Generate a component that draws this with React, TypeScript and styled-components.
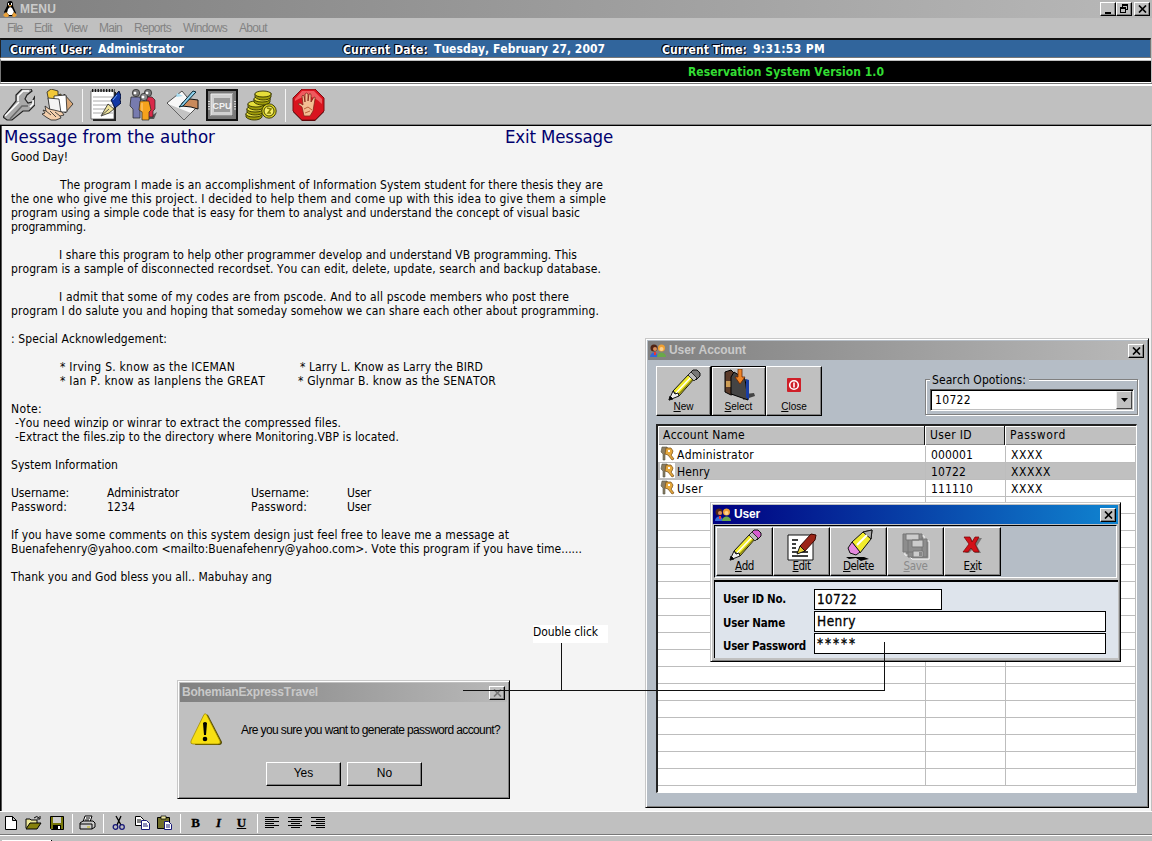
import React, { useLayoutEffect, useRef, useState } from "react";
import styled, { createGlobalStyle, css } from "styled-components";

const tahoma = `"DejaVu Sans Condensed", "DejaVu Sans", sans-serif`;
const arial = `"Liberation Sans", Arial, sans-serif`;

const Global = createGlobalStyle`
  * { box-sizing: border-box; }
  html, body { margin: 0; padding: 0; overflow: hidden; background: #c0c0c0; }
  body { font-family: ${tahoma}; font-stretch: condensed; font-size: 12px; color: #000; }
  svg { display: block; flex: none; }
`;

/* Text whose letter spacing is tuned so the run takes exactly `w` pixels. */
const Run = styled.span`
  display: inline-block;
  white-space: pre;
  font-kerning: none;
`;
function Fit({ w, children }: { w: number; children: React.ReactNode }) {
  const ref = useRef<HTMLSpanElement>(null);
  const [gap, setGap] = useState(0);
  useLayoutEffect(() => {
    const el = ref.current;
    if (!el) return;
    const n = (el.textContent || "").length;
    setGap((w - el.getBoundingClientRect().width) / Math.max(1, n));
  }, [w]);
  return (
    <Run ref={ref} style={{ letterSpacing: `${gap}px` }}>
      {children}
    </Run>
  );
}

const Screen = styled.div`
  position: relative;
  width: 1152px;
  height: 841px;
  overflow: hidden;
  display: flex;
  flex-direction: column;
  background: #c0c0c0;
`;

const TitleBar = styled.div`
  height: 18px;
  flex: none;
  display: flex;
  align-items: center;
  padding: 0 2px 0 3px;
  background: linear-gradient(90deg, #808080, #b8b8b8);
  color: #cbcbcb;
  font: bold 12px/18px ${arial};
`;
const TitleText = styled.div<{ $flush?: boolean }>`
  flex: 1;
  padding-left: ${(p) => (p.$flush ? 0 : 3)}px;
`;
const Buttons = styled.div`
  display: flex;
`;
const WinButton = styled.div<{ $gap?: number }>`
  width: 16px;
  height: 14px;
  flex: none;
  margin-left: ${(p) => p.$gap || 0}px;
  display: flex;
  align-items: center;
  justify-content: center;
  background: #c0c0c0;
  border: 1px solid;
  border-color: #fff #000 #000 #fff;
  box-shadow: inset -1px -1px #808080;
`;

const MenuBar = styled.div`
  height: 20px;
  flex: none;
  display: flex;
  gap: 12px;
  padding-left: 7px;
  font: 12px/20px ${arial};
  color: #838383;
`;

const InfoBar = styled.div`
  height: 20px;
  flex: none;
  margin-right: 1px;
  display: grid;
  grid-template-columns: 88px 245px 91px 228px 91px 1fr;
  padding-left: 9px;
  border-style: solid;
  border-width: 2px 1px 1px;
  border-color: #111 #777 #777 #222;
  background: #31659c;
  color: #fff;
  font-weight: bold;
  line-height: 18px;
`;
const InfoLabel = styled.div`
  padding-top: 1px;
  text-shadow: -1px 0 #001, -1px -1px #001, 1px 1px #123;
`;
const InfoValue = styled.div``;
const Ticker = styled.div`
  height: 25px;
  flex: none;
  margin-right: 1px;
  border-style: solid;
  border-width: 2px 0 1px 1px;
  border-color: #fff #fff #fff #777;
  padding: 1px 0 0;
  background: #c0c0c0;
`;
const TickerInner = styled.div`
  height: 21px;
  background: #000;
  color: #33dd33;
  font-weight: bold;
  line-height: 22px;
  padding-left: 687px;
`;
const Toolbar = styled.div`
  height: 42px;
  flex: none;
  display: flex;
  gap: 7px;
  padding: 5px 0 0 3px;
  border-top: 1px solid #777;
  border-bottom: 1px solid #808080;
  box-shadow: inset 0 2px #fff;
`;
const ToolSep = styled.div`
  width: 1px;
  height: 33px;
  flex: none;
  margin: 0 -1px 0 1px;
  background: #f4f4f4;
`;

const Desktop = styled.div`
  height: 686px;
  flex: none;
  position: relative;
  margin-right: 1px;
  border: solid #000;
  border-width: 1px 0 0 1px;
  box-shadow: inset 1px 0 #555;
  background: #f4f4f4;
`;
const Headings = styled.div`
  display: grid;
  grid-template-columns: 501px 1fr;
  height: 24px;
  padding-left: 3px;
  font-size: 18.5px;
  line-height: 22px;
  color: #00006e;
`;
const Letter = styled.div`
  padding-left: 10px;
  line-height: 14px;
`;
const Line = styled.div<{ $cols?: string }>`
  height: 14px;
  display: grid;
  grid-template-columns: ${(p) => p.$cols || "1fr"};
`;
const Indent = styled.div<{ $by: number }>`
  height: 14px;
  padding-left: ${(p) => p.$by}px;
`;

const Window = styled.section<{ $x: number; $y: number; $w: number; $h: number; $bg: string }>`
  position: absolute;
  left: ${(p) => p.$x}px;
  top: ${(p) => p.$y}px;
  width: ${(p) => p.$w}px;
  height: ${(p) => p.$h}px;
  display: flex;
  flex-direction: column;
  padding: 1px;
  border: 1px solid;
  border-color: #c8c8c8 #000 #000 #c8c8c8;
  box-shadow: inset 1px 1px #fff, inset -1px -1px #808080;
  background: ${(p) => p.$bg};
`;
const Caption = styled.div<{ $active?: boolean }>`
  height: 19px;
  flex: none;
  margin: 1px 1px 0;
  display: flex;
  align-items: center;
  padding: 0 2px;
  font: bold 12px/19px ${arial};
  background: ${(p) =>
    p.$active ? "linear-gradient(90deg, #000080, #1084d0)" : "linear-gradient(90deg, #808080, #b9b9b9)"};
  color: ${(p) => (p.$active ? "#fff" : "#c9c9c9")};
`;

const AccountTop = styled.div`
  display: flex;
  justify-content: space-between;
  height: 64px;
  flex: none;
  padding: 6px 9px 0;
`;
const ButtonStrip = styled.div`
  display: flex;
`;
const BigButton = styled.div<{ $w: number; $h: number; $pressed?: boolean; $font: string; $dim?: boolean }>`
  width: ${(p) => p.$w}px;
  height: ${(p) => p.$h}px;
  display: flex;
  flex-direction: column;
  align-items: center;
  background: #c0c0c0;
  border: 1px solid;
  border-color: #fff #000 #000 #fff;
  box-shadow: inset -1px -1px #808080;
  padding-top: ${(p) => p.$h - 48}px;
  font: ${(p) => p.$font};
  color: ${(p) => (p.$dim ? "#8a8a8a" : "#000")};
  ${(p) => p.$pressed && css`border-color: #000; box-shadow: inset 1px 1px #fff, inset -1px -1px #808080;`}
  u { text-underline-offset: 1px; }
`;
const ButtonText = styled.div`
  margin-top: -1px;
`;
const SearchGroup = styled.div`
  width: 213px;
  height: 36px;
  margin-top: 13px;
  border: 1px solid #808080;
  box-shadow: inset 1px 1px #fff, 1px 1px #fff;
  display: flex;
  flex-direction: column;
  padding-left: 4px;
`;
const Legend = styled.div`
  width: 99px;
  margin-top: -7px;
  padding-left: 2px;
  height: 14px;
  line-height: 14px;
  background: #b5bdc6;
`;
const Combo = styled.div`
  width: 204px;
  height: 22px;
  margin-top: 2px;
  display: flex;
  justify-content: space-between;
  padding: 1px 1px 1px 4px;
  border: 1px solid;
  border-color: #555 #fff #fff #555;
  box-shadow: inset 1px 1px #000, inset -1px -1px #c0c0c0;
  background: #fff;
  line-height: 19px;
`;
const Drop = styled.div`
  width: 16px;
  height: 18px;
  display: flex;
  align-items: center;
  justify-content: center;
  background: #c0c0c0;
  border: 1px solid;
  border-color: #eee #444 #444 #eee;
`;

const Table = styled.div`
  width: 481px;
  height: 369px;
  margin-left: 9px;
  flex: none;
  overflow: hidden;
  border: solid;
  border-width: 2px 1px 1px 2px;
  border-color: #222 #fff #fff #222;
  background: #fff;
`;
const Head = styled.div`
  height: 19px;
  display: grid;
  grid-template-columns: 267px 80px 1fr;
  margin-bottom: 1px;
  background: #c0c0c0;
  border-bottom: 1px solid #000;
  line-height: 19px;
`;
const HeadCell = styled.div`
  padding-left: 5px;
  border-right: 1px solid #111;
  box-shadow: inset 1px 1px #fff, inset 0 -1px #888;
  &:last-child { border-right: 0; }
`;
const Row = styled.div<{ $on?: boolean }>`
  height: 17px;
  display: grid;
  grid-template-columns: 268px 80px 1fr;
  border-bottom: 1px solid #bdbdbd;
  background: ${(p) => (p.$on ? "#c0c0c0" : "#fff")};
  line-height: 18px;
`;
const Cell = styled.div`
  height: 16px;
  display: flex;
  padding-left: 5px;
  border-right: 1px solid #bdbdbd;
  &:first-child { padding-left: 2px; gap: 2px; }
`;

const UserTools = styled.div`
  height: 53px;
  flex: none;
  margin: 1px 2px 0;
  display: flex;
  padding: 1px 0 0 1px;
  border: 1px solid;
  border-color: #000 #fff #fff #000;
  background: #b5bdc6;
`;
const UserForm = styled.div`
  flex: 1;
  margin: 2px 1px 2px 2px;
  display: grid;
  grid-template-columns: 91px 1fr;
  grid-auto-rows: 22px;
  padding: 7px 0 0 8px;
  border: solid #000;
  border-width: 2px 0 0 1px;
  background: #dee4ec;
`;
const Label = styled.div<{ $line: number }>`
  font-weight: bold;
  font-size: 11.5px;
  line-height: ${(p) => p.$line}px;
  white-space: nowrap;
`;
const Field = styled.div<{ $w: number; $secret?: boolean }>`
  width: ${(p) => p.$w}px;
  height: 21px;
  padding-left: 2px;
  border: 1px solid #000;
  background: #fff;
  font-size: 13.5px;
  line-height: ${(p) => (p.$secret ? 18 : 19)}px;
  -webkit-text-stroke: 0.3px #000;
`;

const Question = styled.div`
  display: flex;
  align-items: center;
  height: 55px;
  margin-bottom: 5px;
  padding-left: 11px;
  gap: 18px;
  font: 12px/14px ${arial};
`;
const Answers = styled.div`
  display: flex;
  gap: 6px;
  padding-left: 87px;
`;
const Answer = styled.div`
  width: 75px;
  height: 24px;
  text-align: center;
  font: 12px/21px ${arial};
  border: 1px solid;
  border-color: #fff #000 #000 #fff;
  box-shadow: inset -1px -1px #808080;
`;
const Note = styled.div`
  position: absolute;
  left: 532px;
  top: 499px;
  width: 75px;
  height: 18px;
  background: #fff;
  line-height: 15px;
`;
const Connector = styled.svg`
  position: absolute;
  left: 462px;
  top: 515px;
`;

const FormatBar = styled.div`
  height: 24px;
  flex: none;
  display: flex;
  align-items: center;
  border-top: 1px solid #fff;
  border-bottom: 1px solid #777;
`;
const Tool = styled.div`
  width: 23px;
  height: 22px;
  display: flex;
  align-items: center;
  justify-content: center;
  &:first-child { margin-left: -1px; }
`;
const Mark = styled(Tool)<{ $look: "b" | "i" | "u" }>`
  font: bold 13px/22px "Liberation Serif", serif;
  -webkit-text-stroke: 0.3px #000;
  ${(p) => p.$look === "i" && css`font-style: italic;`}
  ${(p) => p.$look === "u" && css`text-decoration: underline;`}
`;
const Split = styled.div`
  width: 8px;
  height: 19px;
  border-left: 4px solid transparent;
  background: linear-gradient(90deg, #fff 0 1px, transparent 1px) content-box;
`;
const StatusEdge = styled.div`
  flex: 1;
  border-top: 1px solid #fff;
  display: flex;
  align-items: flex-end;
`;
const StatusTab = styled.div`
  width: 50px;
  height: 1px;
  margin-left: 2px;
  background: #fff;
  border-right: 1px solid #000;
`;

/* ---------- icons ---------- */
const K = "#111";
const Penguin = () => (
  <svg width="14" height="16" viewBox="0 0 14 16">
    <path d="M7 0C4 0 4 3 4 5L1 11l3 4h7l2-3-3-7c0-3 0-5-3-5z" fill="#000" />
    <path d="M7 6l-2 2-1 4 2 2h3l2-3-2-4z" fill="#fff" />
    <path d="M5 4h4L7 6zM0 14l3-3 3 3-1 2H2zM14 14l-3-3-2 3 1 2h2z" fill="#e9a13a" />
    <path d="M5 2h1v2H5zM8 2h1v2H8z" fill="#fff" />
  </svg>
);
const XIcon = ({ c = "#000" }: { c?: string }) => (
  <svg width="9" height="8" viewBox="0 0 9 8">
    <path d="M1 .5l7 7M8 .5l-7 7" stroke={c} strokeWidth="1.7" />
  </svg>
);
const Minimize = () => (
  <svg width="10" height="9" viewBox="0 0 10 9"><path d="M2 7h6v2H2z" /></svg>
);
const Restore = () => (
  <svg width="10" height="10" viewBox="0 0 10 10" shapeRendering="crispEdges">
    <path d="M3 0h6v6H7V5h1V2H4v1H3zM1 3h6v6H1zM2 5v3h4V5z" fillRule="evenodd" />
  </svg>
);
const Wrench = () => (
  <svg width="32" height="32" viewBox="0 0 32 32">
    <path d="M13 12V6l6-6h9l1 2-5 4-2 4 3 4 4-1 3-6v9l-6 6h-6L9 31H4l-4-3z" fill="#a9a9a9" stroke="#222" strokeWidth="1.2" />
    <path d="M15 12V7l5-5h6M2 27l14-14M27 18l3-3v-4" stroke="#fff" fill="none" strokeWidth="1.6" />
    <path d="M7 30l12-13h6" stroke="#666" fill="none" strokeWidth="1.5" />
  </svg>
);
const FolderHand = () => (
  <svg width="32" height="32" viewBox="0 0 32 32" stroke="#222" strokeWidth=".8">
    <path d="M22 5l9 10-8 9z" fill="#d9a878" />
    <path d="M5 3l4-3 7 2v4l3-1 1 16-12-2z" fill="#f2c838" />
    <path d="M12 7l12-1 1 17H12z" fill="#fff" />
    <path d="M6 9l11 1 2 14-11-2z" fill="#f4f4f4" />
    <path d="M3 17l4 3 5 1 8 2 2 3-4 1 1 2-5 2H9l-5-3-4-3 3-1-2-3 3 1z" fill="#f3cfac" />
    <path d="M4 22l5 4M8 22l6 6M13 23l5 4" />
  </svg>
);
const Notepad = () => (
  <svg width="32" height="32" viewBox="0 0 32 32">
    <path d="M4 3h23v29H4z" fill="#222" /><path d="M2 2h23v28H2z" fill="#fff" stroke="#444" strokeWidth=".7" />
    <path d="M3 1.5h23" stroke="#111" strokeWidth="3" strokeDasharray="1.3 1.5" />
    <path d="M4 8h20M4 12h20M4 16h20M4 20h20M4 24h20" stroke="#aaa" />
    <path d="M22 11l8-9 2 5-1 4 1 3-6 5z" fill="#1238a5" stroke="#05103a" />
    <path d="M19 15l6 5-5 4-8 3z" fill="#efe39a" stroke="#222" strokeWidth=".8" /><path d="M12 27l8-7" stroke="#555" />
    <path d="M24 11l4-5" stroke="#6ca5ff" />
  </svg>
);
const People = () => (
  <svg width="32" height="32" viewBox="0 0 32 32">
    <path d="M19 30l10-7-3 7z" fill="#555" />
    <g stroke="#222" strokeWidth=".7">
      <path d="M3 8h9l2 10-2 2v9H5v-9l-3-3z" fill="#777baf" />
      <path d="M18 8h6l3 3v9l-2 2v6h-6z" fill="#d92a4a" />
      <path d="M12 12h9l2 9-2 2v8h-7v-8l-3-2z" fill="#f5a21c" />
      <circle cx="8" cy="4" r="3.7" fill="#777" /><circle cx="20" cy="4" r="3.7" fill="#777" />
      <circle cx="16" cy="8" r="3.7" fill="#888" />
    </g>
    <path d="M6 3h2v2H6zM18 3h2v2h-2zM14 7h2v2h-2zM14 14v8" fill="#fff" stroke="#fff" strokeWidth=".5" />
  </svg>
);
const WriteHand = () => (
  <svg width="32" height="32" viewBox="0 0 32 32">
    <path d="M0 14L15 2l14 17-12 12z" fill="#f7f7f7" stroke="#111" strokeWidth=".7" />
    <path d="M1 15l16 16 7-7z" fill="#999" opacity=".55" />
    <path d="M15 14l8-4 8 1v9l-7-2-9-1z" fill="#c98a5c" stroke="#111" />
    <path d="M12 18L26 2l3 1-13 14z" fill="#8ed0ec" stroke="#052733" />
    <path d="M10 4l6 3-7 1z" fill="#a9dcf0" />
  </svg>
);
const Cpu = () => (
  <svg width="32" height="32" viewBox="0 0 32 32">
    <path d="M0 0h32v32H0z" fill="#111" /><path d="M2 2h28v28H2z" fill="#777" />
    <path d="M5 5h22v22H5z" fill="#d0d0d0" stroke="#eee" /><path d="M8 9h16v14H8z" fill="#9a9a9a" />
    <path d="M5 27h22V5" fill="none" stroke="#444" />
    <path d="M3 12v9M29 12v9" stroke="#ddd" strokeDasharray="1 1.5" strokeWidth="2" />
    <text x="16" y="19.5" textAnchor="middle" fontFamily="Liberation Sans" fontSize="9" fontWeight="bold" fill="#f2f2f2">CPU</text>
  </svg>
);
const Coins = () => (
  <svg width="32" height="32" viewBox="0 0 32 32" stroke="#333300" strokeWidth=".9">
    {[[9, 26], [10, 21], [11, 16], [17, 11], [18, 6]].map(([x, y]) => (
      <g key={y}>
        <path d={`M${x - 8} ${y - 1}v3c3 4 14 4 16 0v-4z`} fill="#9e9a09" />
        <ellipse cx={x} cy={y - 1} rx="8.2" ry="3" fill="#e5dd3a" />
      </g>
    ))}
    <circle cx="24" cy="22" r="7.2" fill="#d7cf22" /><circle cx="24" cy="22" r="5" fill="#f5ee64" />
    <path d="M22 19l4 1-3 4h3" fill="none" stroke="#888000" strokeWidth="1.5" />
  </svg>
);
const Stop = () => (
  <svg width="33" height="32" viewBox="0 0 33 32">
    <path d="M10 1h14l8 9v13l-9 9H10l-9-9V10z" fill="#400" />
    <path d="M10 0h13l9 9v13l-9 9H10l-9-9V9z" fill="#d9141f" stroke="#7b0d12" />
    <path d="M10 2h12l8 8v5C20 5 12 6 3 12v-2z" fill="#f0595e" />
    <path d="M10 18l-4-3 2-1 3 2-1-9q1-2 2 0l1 6V5q2-2 3 0v7l1-7q2-1 2 1v7l3-5q2 0 1 2l-2 12-3 5h-6z" fill="#f3bd93" stroke="#82281c" strokeWidth=".8" />
    <path d="M12 20l4-2 4 3M13 24l5-2" stroke="#b8643c" fill="none" />
  </svg>
);
const UsersMini = () => (
  <svg width="16" height="14" viewBox="0 0 16 14">
    <circle cx="4" cy="4" r="3.5" fill="#512414" /><circle cx="5" cy="5" r="2" fill="#d68d5a" />
    <path d="M0 13c0-6 8-6 8 0z" fill="#3568d4" />
    <circle cx="11.5" cy="4" r="3.5" fill="#f0a031" /><circle cx="11.5" cy="5" r="2" fill="#ffd08c" />
    <path d="M7 13c0-6 9-6 9 0z" fill="#6aa84a" /><path d="M4 8h2v3H4z" fill="#e33" />
  </svg>
);
const Pencil = ({ tip = "#777" }: { tip?: string }) => (
  <svg width="34" height="32" viewBox="0 0 34 32" stroke="#111">
    <path d="M6 22L22 5l5 5-15 17z" fill="#f2ec2b" />
    <path d="M9 24L25 7" stroke="#fff" strokeWidth="1.3" /><path d="M11 26L26 10" stroke="#8c8713" strokeWidth="1.3" />
    <path d="M22 5l4-4h4l3 3v3l-4 4z" fill={tip} /><path d="M21 6l3-3 6 6-3 3z" fill="#bbb" strokeWidth=".8" />
    <path d="M6 22l-4 9 10-4-1-3-3 1z" fill="#eee" />
    <path d="M2 31l1-4 3 3z" fill="#000" />
  </svg>
);
const SelectIcon = () => (
  <svg width="32" height="32" viewBox="0 0 32 32">
    <path d="M20 31l12-4-1-3-9 1z" fill="#444" />
    <path d="M2 3l6-2 3 3v21l-3 1-6-3z" fill="#5b3b2a" stroke="#000" /><path d="M3 12h5v6H3z" fill="#cd9d55" />
    <path d="M8 8l3-5 11 7 3 21L8 25z" fill="#444" stroke="#000" /><path d="M23 10l3 1v20l-3-3z" fill="#183da3" />
    <path d="M15 0h4v8h3l-5 7-5-7h3z" fill="#ee8426" stroke="#6d2700" strokeWidth=".8" />
  </svg>
);
const CloseIcon = () => (
  <svg width="32" height="32" viewBox="0 0 32 32">
    <rect x="9" y="9" width="14" height="14" rx="1" fill="#cf1f28" />
    <circle cx="16" cy="16" r="4.3" fill="none" stroke="#fff" strokeWidth="1.6" /><path d="M16 13.5v5" stroke="#fff" strokeWidth="1.6" />
  </svg>
);
const EditIcon = () => (
  <svg width="32" height="32" viewBox="0 0 32 32">
    <path d="M2 6h25v25H2z" fill="#fff" stroke="#111" />
    <path d="M6 11h6M6 15h4M6 19h4M6 23h16M6 27h16" stroke="#000" strokeWidth="1.4" />
    <path d="M14 17L25 5l5 1-1 5-11 12z" fill="#9c2517" stroke="#3a0500" /><path d="M14 17l-3 8 8-3z" fill="#e9ce37" stroke="#111" />
  </svg>
);
const Eraser = () => (
  <svg width="32" height="32" viewBox="0 0 32 32">
    <path d="M3 28h18l5 2-5 1-3 1-5-3-7 1z" fill="#000" />
    <path d="M9 13L20 3l9-2-1 9-11 14z" fill="#f2ec2b" stroke="#111" /><path d="M20 3l9-2-1 9z" fill="#aaa" stroke="#111" />
    <path d="M14 16L24 6" stroke="#fff" strokeWidth="2" /><path d="M9 13l-4 6 2 5 6 2 4-3z" fill="#e58adf" stroke="#111" />
  </svg>
);
const SaveIcon = () => (
  <svg width="32" height="32" viewBox="0 0 32 32" fill="none">
    <path d="M4 6h19v5h5v18H11l-4-4H4z" fill="#888" transform="translate(1 1)" stroke="#fff" />
    <path d="M3 5h19v18H3zM8 10h19v18H8z" fill="#8d8d8d" stroke="#777" />
    <path d="M6 5h13v6H6zM12 11h11v7H12zM13 22h10v6H13z" fill="#ccc" stroke="#777" /><path d="M19 23h3v4h-3z" fill="#888" />
  </svg>
);
const ExitIcon = () => (
  <svg width="32" height="32" viewBox="0 0 32 32">
    <path d="M9 9h5l3 5 4-5h4l-5 8 4 7h-6l-2-4-4 4H8l6-8z" fill="#777" />
    <path d="M7 8h6l2 5 3-5h4l-4 7 4 8h-5l-3-4-3 4H6l6-8z" fill="#d31018" stroke="#700" strokeWidth=".7" />
  </svg>
);
const Keys = () => (
  <svg width="15" height="15" viewBox="0 0 15 15">
    <path d="M0 0h15v15H0z" fill="#fff" />
    <path d="M2 1h5l2 3-2 3-2 1v6H3V8L1 6z" fill="#8b7e64" stroke="#554" strokeWidth=".6" />
    <path d="M6 2h5l2 3-1 3-1 1 3 4-2 1-4-5-3-1z" fill="#e5a83c" stroke="#764b12" strokeWidth=".7" /><path d="M8 4h2v2H8z" fill="#fff" />
  </svg>
);
const Warning = () => (
  <svg width="33" height="33" viewBox="0 0 33 33">
    <path d="M16 2q1-1 2 0l14 27q0 3-3 3H5z" fill="#504800" />
    <path d="M14 1.5q1-1.5 2.5 0L30 28q1 3-2 3H3q-3 0-2-3z" fill="#f7df12" stroke="#a68e00" strokeWidth=".8" />
    <path d="M13 10q2-2 4 0l-1 12h-2z" /><circle cx="15" cy="26" r="2.3" />
  </svg>
);
const NewDoc = () => <svg width="16" height="16" viewBox="0 0 16 16"><path d="M2.5 1.5h7l4 4v9h-11zM9.5 1.5v4h4" fill="#fff" stroke="#000" /></svg>;
const OpenDoc = () => (
  <svg width="17" height="16" viewBox="0 0 17 16"><path d="M1 13V4h4l1 1h6v3" fill="#eee99a" stroke="#000" /><path d="M1 14l4-6h11l-4 6z" fill="#86810b" stroke="#000" /><path d="M9 3q3-3 5 0m1-2v3h-3" fill="none" stroke="#000" /></svg>
);
const SaveDoc = () => (
  <svg width="16" height="16" viewBox="0 0 16 16"><path d="M1.5 1.5h13v13h-12l-1-1z" fill="#77770a" stroke="#000" /><path d="M4 2h8v6H4z" fill="#ccc" /><path d="M4 10h8v4H4z" /><path d="M9 11h2v3H9z" fill="#fff" /></svg>
);
const Printer = () => (
  <svg width="17" height="16" viewBox="0 0 17 16" stroke="#000"><path d="M4 7l2-6h7l-2 6z" fill="#fff" /><path d="M1 8l3-2h10l2 2v4l-3 2H1z" fill="#ccc" /><path d="M1 9h12v5M7 3h4M6 5h4" fill="none" /><path d="M8 12h3" stroke="#c5b900" /></svg>
);
const Cut = () => (
  <svg width="16" height="16" viewBox="0 0 16 16" fill="none"><path d="M5 1l5 9M10 1L6 10" stroke="#000" strokeWidth="1.3" /><circle cx="4.5" cy="12" r="2.3" stroke="#181878" strokeWidth="1.3" /><circle cx="11" cy="12" r="2.3" stroke="#181878" strokeWidth="1.3" /></svg>
);
const Copy = () => (
  <svg width="16" height="16" viewBox="0 0 16 16" fill="#fff"><path d="M1.5 1.5h5l3 3v6h-8zM3 5h4M3 7h4" stroke="#000" /><path d="M7.5 5.5h5l3 3v6h-8zM9 9h4M9 11h5" stroke="#181878" /></svg>
);
const Paste = () => (
  <svg width="17" height="16" viewBox="0 0 17 16"><path d="M1.5 2.5h12v11h-12z" fill="#716f2a" stroke="#000" /><path d="M5 1h5v3H5z" fill="#eee8a0" stroke="#000" strokeWidth=".7" /><path d="M8.5 6.5h4l3 3v5h-7zM10 10h4M10 12h4" fill="#fff" stroke="#181878" /></svg>
);
const Align = ({ mode }: { mode: 0 | 1 | 2 }) => (
  <svg width="15" height="14" viewBox="0 0 15 14" shapeRendering="crispEdges">
    {[0, 1, 2, 3, 4, 5].map((i) => {
      const w = i % 2 ? 9 : 14;
      return <rect key={i} x={((14 - w) * mode) / 2} y={i * 2 + 1} width={w} height="1" />;
    })}
  </svg>
);

const accounts = [
  { name: "Administrator", nw: 77, id: "000001", iw: 42, pass: "XXXX", pw: 32 },
  { name: "Henry", nw: 33, id: "10722", iw: 35, pass: "XXXXX", pw: 40, on: true },
  { name: "User", nw: 26, id: "111110", iw: 42, pass: "XXXX", pw: 32 },
];

type Piece = [text: string, width: number, indent?: number];
const letter: { cols?: string; parts: Piece[] }[] = [
  { parts: [["Good Day!", 57]] },
  { parts: [] },
  { parts: [["The program I made is an accomplishment of Information System student for there thesis they are", 543, 49]] },
  { parts: [["the one who give me this project. I decided to help them and come up with this idea to give them a simple", 595]] },
  { parts: [["program using a simple code that is easy for them to analyst and understand the concept of visual basic", 569]] },
  { parts: [["programming.", 75]] },
  { parts: [] },
  { parts: [["I share this program to help other programmer develop and understand VB programming. This", 518, 48]] },
  { parts: [["program is a sample of disconnected recordset. You can edit, delete, update, search and backup database.", 590]] },
  { parts: [] },
  { parts: [["I admit that some of my codes are from pscode. And to all pscode members who post there", 510, 48]] },
  { parts: [["program I do salute you and hoping that someday somehow we can share each other about programming.", 588]] },
  { parts: [] },
  { parts: [[": Special Acknowledgement:", 156]] },
  { parts: [] },
  { cols: "289px 1fr", parts: [["* Irving S. know as the ICEMAN", 175, 49], ["* Larry L. Know as Larry the BIRD", 183]] },
  { cols: "287px 1fr", parts: [["* Ian P. know as Ianplens the GREAT", 205, 49], ["* Glynmar B. know as the SENATOR", 198]] },
  { parts: [] },
  { parts: [["Note:", 31]] },
  { parts: [["-You need winzip or winrar to extract the compressed files.", 326, 4]] },
  { parts: [["-Extract the files.zip to the directory where Monitoring.VBP is located.", 384, 4]] },
  { parts: [] },
  { parts: [["System Information", 107]] },
  { parts: [] },
  { cols: "96px 144px 96px 1fr", parts: [["Username:", 58], ["Administrator", 72], ["Username:", 58], ["User", 24]] },
  { cols: "96px 144px 96px 1fr", parts: [["Password:", 56], ["1234", 28], ["Password:", 56], ["User", 24]] },
  { parts: [] },
  { parts: [["If you have some comments on this system design just feel free to leave me a message at", 498]] },
  { parts: [["Buenafehenry@yahoo.com <mailto:Buenafehenry@yahoo.com>. Vote this program if you have time......", 571]] },
  { parts: [] },
  { parts: [["Thank you and God bless you all.. Mabuhay ang", 261]] },
];

const small = `10px/12px ${arial}`;
const mid = `11.5px/13px ${tahoma}`;

export default function App() {
  return (
    <Screen>
      <Global />
      <TitleBar>
        <Penguin />
        <TitleText><Fit w={36}>MENU</Fit></TitleText>
        <Buttons>
          <WinButton><Minimize /></WinButton>
          <WinButton><Restore /></WinButton>
          <WinButton $gap={2}><XIcon /></WinButton>
        </Buttons>
      </TitleBar>
      <MenuBar>
        <Fit w={15}>File</Fit><Fit w={18}>Edit</Fit><Fit w={23}>View</Fit><Fit w={23}>Main</Fit>
        <Fit w={37}>Reports</Fit><Fit w={44}>Windows</Fit><Fit w={28}>About</Fit>
      </MenuBar>
      <InfoBar>
        <InfoLabel><Fit w={82}>Current User:</Fit></InfoLabel><InfoValue><Fit w={86}>Administrator</Fit></InfoValue>
        <InfoLabel><Fit w={85}>Current Date:</Fit></InfoLabel><InfoValue><Fit w={171}>Tuesday, February 27, 2007</Fit></InfoValue>
        <InfoLabel><Fit w={85}>Current Time:</Fit></InfoLabel><InfoValue><Fit w={72}>9:31:53 PM</Fit></InfoValue>
      </InfoBar>
      <Ticker><TickerInner><Fit w={196}>Reservation System Version 1.0</Fit></TickerInner></Ticker>
      <Toolbar>
        <Wrench /><FolderHand /><ToolSep />
        <Notepad /><People /><WriteHand /><Cpu /><Coins /><ToolSep /><Stop />
      </Toolbar>
      <Desktop>
        <Headings>
          <div><Fit w={211}>Message from the author</Fit></div>
          <div><Fit w={108}>Exit Message</Fit></div>
        </Headings>
        <Letter>
          {letter.map((l, i) => (
            <Line key={i} $cols={l.cols}>
              {l.parts.map(([t, w, by], j) => (
                <Indent key={j} $by={by || 0}><Fit w={w}>{t}</Fit></Indent>
              ))}
            </Line>
          ))}
        </Letter>

        <Window $x={644} $y={212} $w={504} $h={470} $bg="#b5bdc6">
          <Caption>
            <UsersMini />
            <TitleText><Fit w={77}>User Account</Fit></TitleText>
            <WinButton><XIcon /></WinButton>
          </Caption>
          <AccountTop>
            <ButtonStrip>
              <BigButton $w={55} $h={50} $font={small}><Pencil /><span><u>N</u>ew</span></BigButton>
              <BigButton $w={55} $h={50} $font={small} $pressed><SelectIcon /><span><u>S</u>elect</span></BigButton>
              <BigButton $w={56} $h={50} $font={small}><CloseIcon /><span><u>C</u>lose</span></BigButton>
            </ButtonStrip>
            <SearchGroup>
              <Legend><Fit w={94}>Search Opotions:</Fit></Legend>
              <Combo>
                <Fit w={36}>10722</Fit>
                <Drop><svg width="7" height="4" viewBox="0 0 7 4"><path d="M0 0h7L3.5 4z" /></svg></Drop>
              </Combo>
            </SearchGroup>
          </AccountTop>
          <Table>
            <Head>
              <HeadCell><Fit w={82}>Account Name</Fit></HeadCell>
              <HeadCell><Fit w={42}>User ID</Fit></HeadCell>
              <HeadCell><Fit w={56}>Password</Fit></HeadCell>
            </Head>
            {accounts.map((a) => (
              <Row key={a.name} $on={a.on}>
                <Cell><Keys /><Fit w={a.nw}>{a.name}</Fit></Cell>
                <Cell><Fit w={a.iw}>{a.id}</Fit></Cell>
                <Cell><Fit w={a.pw}>{a.pass}</Fit></Cell>
              </Row>
            ))}
            {Array.from({ length: 17 }, (_, i) => (
              <Row key={i}><Cell /><Cell /><Cell /></Row>
            ))}
          </Table>
        </Window>

        <Window $x={709} $y={376} $w={411} $h={160} $bg="#c0c0c0">
          <Caption $active>
            <UsersMini />
            <TitleText><Fit w={26}>User</Fit></TitleText>
            <WinButton><XIcon /></WinButton>
          </Caption>
          <UserTools>
            <BigButton $w={57} $h={49} $font={mid}><Pencil tip="#d65bd0" /><ButtonText><Fit w={19}><u>A</u>dd</Fit></ButtonText></BigButton>
            <BigButton $w={57} $h={49} $font={mid}><EditIcon /><ButtonText><Fit w={18}><u>E</u>dit</Fit></ButtonText></BigButton>
            <BigButton $w={57} $h={49} $font={mid}><Eraser /><ButtonText><Fit w={31}><u>D</u>elete</Fit></ButtonText></BigButton>
            <BigButton $w={57} $h={49} $font={mid} $dim><SaveIcon /><ButtonText><Fit w={24}><u>S</u>ave</Fit></ButtonText></BigButton>
            <BigButton $w={57} $h={49} $font={mid}><ExitIcon /><ButtonText><Fit w={18}>E<u>x</u>it</Fit></ButtonText></BigButton>
          </UserTools>
          <UserForm>
            <Label $line={20}><Fit w={63}>User ID No.</Fit></Label><Field $w={128}><Fit w={40}>10722</Fit></Field>
            <Label $line={24}><Fit w={62}>User Name</Fit></Label><Field $w={292}><Fit w={39}>Henry</Fit></Field>
            <Label $line={26}><Fit w={83}>User Password</Fit></Label><Field $w={292} $secret><Fit w={40}>*****</Fit></Field>
          </UserForm>
        </Window>

        <Window $x={176} $y={554} $w={333} $h={119} $bg="#c0c0c0">
          <Caption>
            <TitleText $flush><Fit w={136}>BohemianExpressTravel</Fit></TitleText>
            <WinButton><XIcon c="#777" /></WinButton>
          </Caption>
          <Question><Warning /><Fit w={259}>Are you sure you want to generate password account?</Fit></Question>
          <Answers><Answer>Yes</Answer><Answer>No</Answer></Answers>
        </Window>

        <Note><Fit w={65}>Double click</Fit></Note>
        <Connector width="424" height="52" viewBox="0 0 424 52" shapeRendering="crispEdges">
          <path d="M0 49.5h421.5V1M98.5 2v47" fill="none" stroke={K} />
        </Connector>
      </Desktop>
      <FormatBar>
        <Tool><NewDoc /></Tool><Tool><OpenDoc /></Tool><Tool><SaveDoc /></Tool><Split />
        <Tool><Printer /></Tool><Split />
        <Tool><Cut /></Tool><Tool><Copy /></Tool><Tool><Paste /></Tool><Split />
        <Mark $look="b">B</Mark><Mark $look="i">I</Mark><Mark $look="u">U</Mark><Split />
        <Tool><Align mode={0} /></Tool><Tool><Align mode={1} /></Tool><Tool><Align mode={2} /></Tool>
      </FormatBar>
      <StatusEdge><StatusTab /></StatusEdge>
    </Screen>
  );
}
